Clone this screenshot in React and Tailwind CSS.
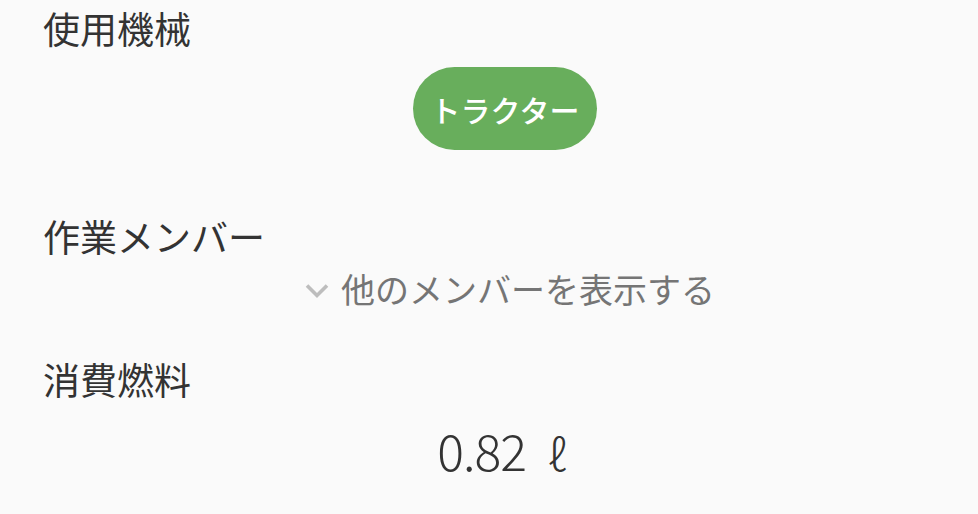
export default function App() {
  const font = { fontFamily: '"Noto Sans CJK JP", "Noto Sans", sans-serif' };
  return (
    <div
      className="w-[978px] h-[514px] bg-[#fafafa] text-[#333333] pl-[43px] pr-[11px] overflow-hidden flex flex-col"
      style={font}
    >
      <div className="text-[37px] leading-[56px]">使用機械</div>
      <div className="flex justify-center mt-[11px]">
        <div className="h-[83px] px-[18px] rounded-full bg-[#68ae5c] text-white text-[30px] font-medium flex items-center leading-none">
          トラクター
        </div>
      </div>
      <div className="text-[37px] leading-[56px] mt-[58px]">作業メンバー</div>
      <div className="flex justify-center items-center mt-[3px] h-[44px] gap-[12px] text-[#757575] ml-[10px]">
        <svg width="24" height="16" viewBox="0 0 24 16" className="mt-[4px]">
          <polyline
            points="2,2.5 12,12.5 22,2.5"
            fill="none"
            stroke="#bdbdbd"
            strokeWidth="3.6"
          />
        </svg>
        <span className="text-[34px] leading-[44px]">他のメンバーを表示する</span>
      </div>
      <div className="text-[37px] leading-[56px] mt-[40px]">消費燃料</div>
      <div className="flex justify-center items-baseline mt-[10px] mr-[6px]">
        <span className="text-[50px] leading-[64px] font-light tracking-[-1px]">0.82</span>
        <span className="text-[44px] leading-[64px] font-light ml-[22px]">ℓ</span>
      </div>
    </div>
  );
}
